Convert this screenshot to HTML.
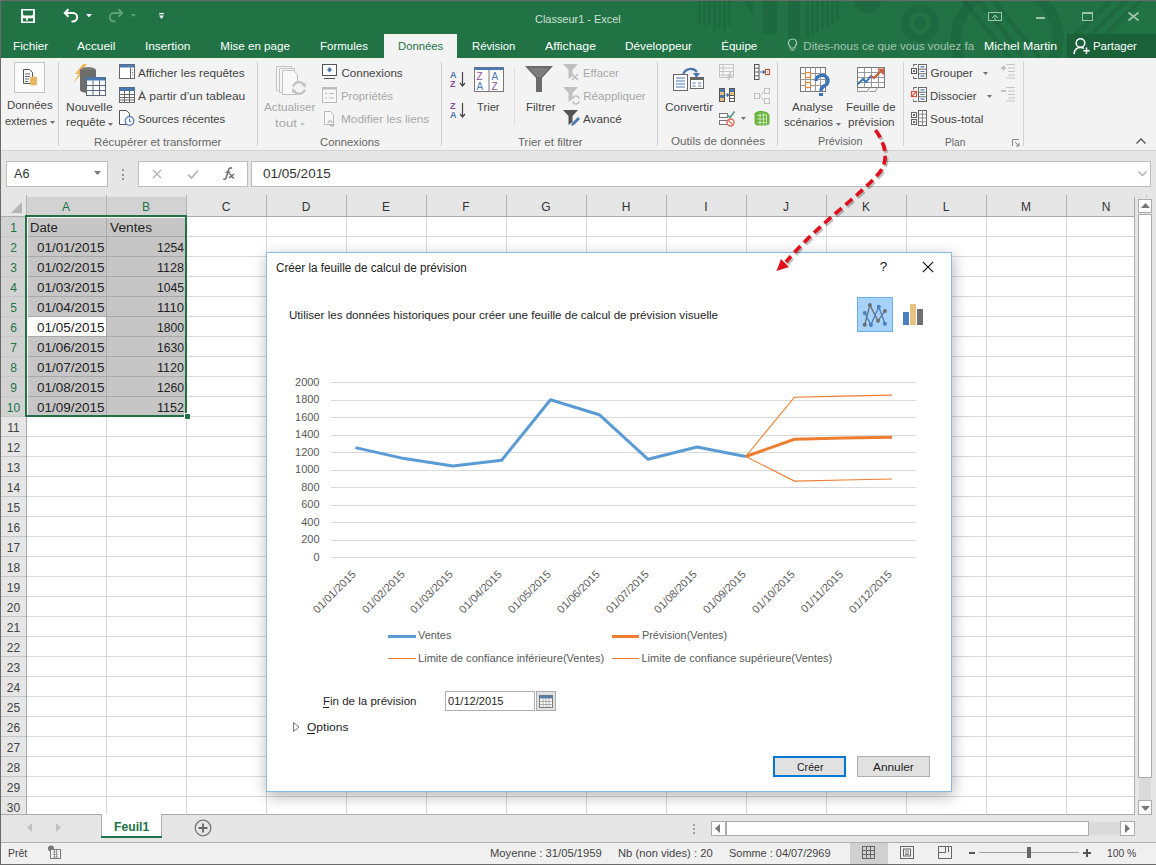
<!DOCTYPE html><html><head><meta charset="utf-8"><style>
html,body{margin:0;padding:0;}
body{width:1156px;height:865px;position:relative;overflow:hidden;background:#fff;font-family:"Liberation Sans",sans-serif;}
.t{position:absolute;white-space:nowrap;}
svg{overflow:visible}
</style></head><body>
<div style="position:absolute;left:0px;top:0px;width:1156px;height:58px;background:#217346"></div>
<svg style="position:absolute;left:0px;top:1px;" width="1156" height="57" viewBox="0 0 1156 57"><defs><clipPath id="tb"><rect x="0" y="0" width="1156" height="57"/></clipPath></defs><g clip-path="url(#tb)"><g fill="rgba(0,0,0,0.075)"><rect x="698" y="0" width="3" height="22"/><rect x="703" y="0" width="3" height="26"/><rect x="708" y="0" width="3" height="24"/><rect x="713" y="0" width="3" height="31"/><rect x="718" y="0" width="3" height="27"/><rect x="723" y="0" width="3" height="30"/><rect x="728" y="0" width="3" height="25"/><path d="M744 0 H753 V15 z"/><rect x="763" y="0" width="14" height="33"/><rect x="788" y="0" width="12" height="38"/><rect x="806" y="0" width="3" height="36"/><rect x="811" y="0" width="3" height="33"/><rect x="816" y="0" width="3" height="31"/><rect x="821" y="0" width="3" height="28"/><rect x="826" y="0" width="3" height="26"/><rect x="831" y="0" width="3" height="23"/><rect x="836" y="0" width="3" height="20"/><path d="M854 0 A13.5 12 0 0 0 881 0z"/><circle cx="920" cy="22" r="6.5"/></g>
<g fill="none" stroke="rgba(0,0,0,0.075)"><circle cx="920" cy="22" r="15" stroke-width="8"/><circle cx="1007" cy="38" r="51" stroke-width="11"/>
<path d="M960 -5 L1010 57 M975 -5 L1025 57 M990 -5 L1040 57" stroke-width="5"/>
<path d="M1075 35 L1115 -5 M1090 35 L1130 -5 M1105 35 L1145 -5" stroke-width="5"/></g></g></svg>
<svg style="position:absolute;left:21px;top:9px;" width="14" height="14" viewBox="0 0 14 14"><path d="M0 0H14V14H0z M2 1.5V5Q2 6.5 3.5 6.5H10.5Q12 6.5 12 5V1.5z M2 9.3H5.2V11.6H7V9.3H12V12.6H2z" fill="#fff" fill-rule="evenodd"/></svg>
<svg style="position:absolute;left:63px;top:8px;" width="17" height="15" viewBox="0 0 17 15"><path d="M5.5 1.2 L1.8 5 L5.5 8.8" stroke="#fff" stroke-width="2" fill="none"/><path d="M2.5 5 H10 A4.2 4.2 0 0 1 10 13.4 H8.5" stroke="#fff" stroke-width="2" fill="none"/></svg>
<svg style="position:absolute;left:86px;top:14px;" width="6" height="3" viewBox="0 0 6 3"><path d="M0 0h6l-3 3.2z" fill="#fff"/></svg>
<svg style="position:absolute;left:107px;top:8px;" width="17" height="15" viewBox="0 0 17 15"><path d="M11.5 1.2 L15.2 5 L11.5 8.8" stroke="#5d9f78" stroke-width="2" fill="none"/><path d="M14.5 5 H7 A4.2 4.2 0 0 0 7 13.4 H8.5" stroke="#5d9f78" stroke-width="2" fill="none"/></svg>
<svg style="position:absolute;left:131px;top:14px;" width="5" height="3" viewBox="0 0 5 3"><path d="M0 0h5l-2.5 3z" fill="#5d9f78"/></svg>
<svg style="position:absolute;left:159px;top:13px;" width="5" height="7" viewBox="0 0 5 7"><rect x="0" y="0" width="5" height="1.2" fill="#fff"/><path d="M0 2.5h5l-2.5 3.5z" fill="#fff"/></svg>
<div class="t" style="left:534.70px;top:12.68px;font-size:11.6px;line-height:11.6px;color:#cfe0d5;transform:scaleX(0.9439);transform-origin:0 0;">Classeur1 - Excel</div>
<svg style="position:absolute;left:988px;top:12px;" width="14" height="9" viewBox="0 0 14 9"><rect x="0.5" y="0.5" width="13" height="8" fill="none" stroke="#9cc4ab"/><path d="M4 6 L7 3 L10 6" stroke="#9cc4ab" fill="none"/><path d="M7 3 V8" stroke="#9cc4ab"/></svg>
<div style="position:absolute;left:1036px;top:17px;width:9px;height:2px;background:#9cc4ab"></div>
<svg style="position:absolute;left:1082px;top:12px;" width="11" height="9" viewBox="0 0 11 9"><rect x="0.5" y="0.5" width="10" height="8" fill="none" stroke="#9cc4ab"/><rect x="0.5" y="0.5" width="10" height="1.5" fill="#9cc4ab"/></svg>
<svg style="position:absolute;left:1128px;top:12px;" width="11" height="9" viewBox="0 0 11 9"><path d="M0.5 0.5 L10.5 8.5 M10.5 0.5 L0.5 8.5" stroke="#9cc4ab" stroke-width="1.7"/></svg>
<div style="position:absolute;left:384px;top:34px;width:73px;height:24px;background:#f3f3f3"></div>
<div style="position:absolute;left:1067px;top:34px;width:89px;height:24px;background:#1a6139"></div>
<div class="t" style="left:13.10px;top:40.48px;font-size:11.6px;line-height:11.6px;color:#ffffff;transform:scaleX(1.0113);transform-origin:0 0;">Fichier</div>
<div class="t" style="left:77.30px;top:40.48px;font-size:11.6px;line-height:11.6px;color:#ffffff;transform:scaleX(1.0269);transform-origin:0 0;">Accueil</div>
<div class="t" style="left:145.30px;top:40.48px;font-size:11.6px;line-height:11.6px;color:#ffffff;transform:scaleX(1.0204);transform-origin:0 0;">Insertion</div>
<div class="t" style="left:220.30px;top:40.48px;font-size:11.6px;line-height:11.6px;color:#ffffff;">Mise en page</div>
<div class="t" style="left:319.50px;top:40.48px;font-size:11.6px;line-height:11.6px;color:#ffffff;transform:scaleX(0.9929);transform-origin:0 0;">Formules</div>
<div class="t" style="left:472.40px;top:40.48px;font-size:11.6px;line-height:11.6px;color:#ffffff;transform:scaleX(0.9733);transform-origin:0 0;">Révision</div>
<div class="t" style="left:545.30px;top:40.48px;font-size:11.6px;line-height:11.6px;color:#ffffff;transform:scaleX(1.0590);transform-origin:0 0;">Affichage</div>
<div class="t" style="left:625.20px;top:40.48px;font-size:11.6px;line-height:11.6px;color:#ffffff;transform:scaleX(1.0201);transform-origin:0 0;">Développeur</div>
<div class="t" style="left:721.20px;top:40.48px;font-size:11.6px;line-height:11.6px;color:#ffffff;">Équipe</div>
<div class="t" style="left:983.80px;top:40.48px;font-size:11.6px;line-height:11.6px;color:#ffffff;transform:scaleX(1.0613);transform-origin:0 0;">Michel Martin</div>
<div class="t" style="left:1093.20px;top:40.48px;font-size:11.6px;line-height:11.6px;color:#ffffff;transform:scaleX(0.9844);transform-origin:0 0;">Partager</div>
<div class="t" style="left:397.50px;top:40.48px;font-size:11.6px;line-height:11.6px;color:#217346;transform:scaleX(0.9734);transform-origin:0 0;">Données</div>
<div class="t" style="left:803.30px;top:40.48px;font-size:11.6px;line-height:11.6px;color:#a3c4af;">Dites-nous ce que vous voulez fa</div>
<svg style="position:absolute;left:787px;top:38px;" width="11" height="14" viewBox="0 0 11 14"><path d="M5.5 1 A4 4 0 0 1 8 8.2 V10 H3 V8.2 A4 4 0 0 1 5.5 1z" fill="none" stroke="#a3c4af" stroke-width="1.2"/><path d="M3.5 12 H7.5" stroke="#a3c4af" stroke-width="1.2"/></svg>
<svg style="position:absolute;left:1073px;top:37px;" width="18" height="18" viewBox="0 0 18 18"><circle cx="7.5" cy="6" r="4.3" fill="none" stroke="#fff" stroke-width="1.5"/><path d="M1 17 C1.5 12 4 10.5 7.5 10.5 C9 10.5 10 10.8 11 11.3" fill="none" stroke="#fff" stroke-width="1.5"/><path d="M13.5 10.5 V17 M10.3 13.8 H16.7" stroke="#fff" stroke-width="1.5"/></svg>
<div style="position:absolute;left:0px;top:58px;width:1156px;height:92px;background:#f3f3f3"></div>
<div style="position:absolute;left:0px;top:150px;width:1156px;height:1px;background:#d4d4d4"></div>
<div style="position:absolute;left:58px;top:62px;width:1px;height:84px;background:#d0d0d0"></div>
<div style="position:absolute;left:257px;top:62px;width:1px;height:84px;background:#d0d0d0"></div>
<div style="position:absolute;left:441px;top:62px;width:1px;height:84px;background:#d0d0d0"></div>
<div style="position:absolute;left:657px;top:62px;width:1px;height:84px;background:#d0d0d0"></div>
<div style="position:absolute;left:777px;top:62px;width:1px;height:84px;background:#d0d0d0"></div>
<div style="position:absolute;left:903px;top:62px;width:1px;height:84px;background:#d0d0d0"></div>
<div style="position:absolute;left:1023px;top:62px;width:1px;height:84px;background:#d0d0d0"></div>
<div style="position:absolute;left:514px;top:68px;width:1px;height:58px;background:#dedede"></div>
<div class="t" style="left:7.30px;top:98.78px;font-size:11.6px;line-height:11.6px;color:#444444;transform:scaleX(0.9820);transform-origin:0 0;">Données</div>
<div class="t" style="left:4.70px;top:114.58px;font-size:11.6px;line-height:11.6px;color:#444444;transform:scaleX(0.9440);transform-origin:0 0;">externes</div>
<div class="t" style="left:66.40px;top:100.78px;font-size:11.6px;line-height:11.6px;color:#444444;transform:scaleX(1.0324);transform-origin:0 0;">Nouvelle</div>
<div class="t" style="left:65.60px;top:116.18px;font-size:11.6px;line-height:11.6px;color:#444444;transform:scaleX(1.0065);transform-origin:0 0;">requête</div>
<div class="t" style="left:138.30px;top:66.98px;font-size:11.6px;line-height:11.6px;color:#444444;transform:scaleX(1.0110);transform-origin:0 0;">Afficher les requêtes</div>
<div class="t" style="left:138.30px;top:90.38px;font-size:11.6px;line-height:11.6px;color:#444444;transform:scaleX(1.0335);transform-origin:0 0;">À partir d’un tableau</div>
<div class="t" style="left:138.30px;top:113.08px;font-size:11.6px;line-height:11.6px;color:#444444;transform:scaleX(0.9660);transform-origin:0 0;">Sources récentes</div>
<div class="t" style="left:94.10px;top:135.88px;font-size:11.6px;line-height:11.6px;color:#666666;transform:scaleX(0.9831);transform-origin:0 0;">Récupérer et transformer</div>
<div class="t" style="left:264.30px;top:100.98px;font-size:11.6px;line-height:11.6px;color:#a8a8a8;transform:scaleX(1.0111);transform-origin:0 0;">Actualiser</div>
<div class="t" style="left:275.00px;top:116.98px;font-size:11.6px;line-height:11.6px;color:#a8a8a8;transform:scaleX(1.1319);transform-origin:0 0;">tout</div>
<div class="t" style="left:341.40px;top:67.08px;font-size:11.6px;line-height:11.6px;color:#444444;">Connexions</div>
<div class="t" style="left:341.40px;top:90.18px;font-size:11.6px;line-height:11.6px;color:#a8a8a8;transform:scaleX(0.9835);transform-origin:0 0;">Propriétés</div>
<div class="t" style="left:341.40px;top:112.98px;font-size:11.6px;line-height:11.6px;color:#a8a8a8;transform:scaleX(1.0221);transform-origin:0 0;">Modifier les liens</div>
<div class="t" style="left:319.80px;top:135.88px;font-size:11.6px;line-height:11.6px;color:#666666;transform:scaleX(0.9745);transform-origin:0 0;">Connexions</div>
<div class="t" style="left:477.40px;top:100.88px;font-size:11.6px;line-height:11.6px;color:#444444;transform:scaleX(0.9654);transform-origin:0 0;">Trier</div>
<div class="t" style="left:525.50px;top:100.88px;font-size:11.6px;line-height:11.6px;color:#444444;transform:scaleX(0.9952);transform-origin:0 0;">Filtrer</div>
<div class="t" style="left:583.20px;top:67.08px;font-size:11.6px;line-height:11.6px;color:#a8a8a8;transform:scaleX(0.9797);transform-origin:0 0;">Effacer</div>
<div class="t" style="left:583.20px;top:89.98px;font-size:11.6px;line-height:11.6px;color:#a8a8a8;">Réappliquer</div>
<div class="t" style="left:583.20px;top:112.88px;font-size:11.6px;line-height:11.6px;color:#444444;transform:scaleX(1.0082);transform-origin:0 0;">Avancé</div>
<div class="t" style="left:517.50px;top:135.88px;font-size:11.6px;line-height:11.6px;color:#666666;transform:scaleX(0.9907);transform-origin:0 0;">Trier et filtrer</div>
<div class="t" style="left:664.80px;top:100.58px;font-size:11.6px;line-height:11.6px;color:#444444;transform:scaleX(1.0242);transform-origin:0 0;">Convertir</div>
<div class="t" style="left:670.70px;top:135.38px;font-size:11.6px;line-height:11.6px;color:#666666;transform:scaleX(1.0063);transform-origin:0 0;">Outils de données</div>
<div class="t" style="left:791.90px;top:100.78px;font-size:11.6px;line-height:11.6px;color:#444444;transform:scaleX(0.9935);transform-origin:0 0;">Analyse</div>
<div class="t" style="left:784.00px;top:116.18px;font-size:11.6px;line-height:11.6px;color:#444444;transform:scaleX(0.9870);transform-origin:0 0;">scénarios</div>
<div class="t" style="left:846.40px;top:100.78px;font-size:11.6px;line-height:11.6px;color:#444444;transform:scaleX(0.9861);transform-origin:0 0;">Feuille de</div>
<div class="t" style="left:847.60px;top:116.18px;font-size:11.6px;line-height:11.6px;color:#444444;transform:scaleX(1.0038);transform-origin:0 0;">prévision</div>
<div class="t" style="left:817.70px;top:135.38px;font-size:11.6px;line-height:11.6px;color:#666666;transform:scaleX(0.9327);transform-origin:0 0;">Prévision</div>
<div class="t" style="left:930.40px;top:66.78px;font-size:11.6px;line-height:11.6px;color:#444444;">Grouper</div>
<div class="t" style="left:930.40px;top:89.78px;font-size:11.6px;line-height:11.6px;color:#444444;transform:scaleX(0.9770);transform-origin:0 0;">Dissocier</div>
<div class="t" style="left:930.40px;top:112.88px;font-size:11.6px;line-height:11.6px;color:#444444;transform:scaleX(1.0224);transform-origin:0 0;">Sous-total</div>
<div class="t" style="left:944.80px;top:135.68px;font-size:11.6px;line-height:11.6px;color:#666666;transform:scaleX(0.8786);transform-origin:0 0;">Plan</div>
<svg style="position:absolute;left:50px;top:121px;" width="5" height="3" viewBox="0 0 5 3"><path d="M0 0h5l-2.5 3z" fill="#707070"/></svg>
<svg style="position:absolute;left:108px;top:122.5px;" width="5" height="3" viewBox="0 0 5 3"><path d="M0 0h5l-2.5 3z" fill="#707070"/></svg>
<svg style="position:absolute;left:299.5px;top:123px;" width="5" height="3" viewBox="0 0 5 3"><path d="M0 0h5l-2.5 3z" fill="#c0c0c0"/></svg>
<svg style="position:absolute;left:836px;top:122.5px;" width="5" height="3" viewBox="0 0 5 3"><path d="M0 0h5l-2.5 3z" fill="#707070"/></svg>
<svg style="position:absolute;left:983px;top:71.5px;" width="5" height="3" viewBox="0 0 5 3"><path d="M0 0h5l-2.5 3z" fill="#707070"/></svg>
<svg style="position:absolute;left:987px;top:94.5px;" width="5" height="3" viewBox="0 0 5 3"><path d="M0 0h5l-2.5 3z" fill="#707070"/></svg>
<svg style="position:absolute;left:741px;top:117px;" width="5" height="3" viewBox="0 0 5 3"><path d="M0 0h5l-2.5 3z" fill="#707070"/></svg>
<div style="position:absolute;left:14px;top:62px;width:29px;height:29px;background:#fbfbfb;border:1px solid #c6c6c6"></div>
<svg style="position:absolute;left:22px;top:68px;" width="16" height="18" viewBox="0 0 16 18"><path d="M1.5 1.5h6l3 3v11h-9z" fill="#fff" stroke="#555" stroke-width="1"/><path d="M3 6h5M3 8.5h5M3 11h4M3 13.5h3" stroke="#666" stroke-width="1"/><ellipse cx="11.5" cy="10" rx="3.5" ry="1.5" fill="#e8b766"/><rect x="8" y="10" width="7" height="6" fill="#e8b766"/><ellipse cx="11.5" cy="16" rx="3.5" ry="1.5" fill="#e8b766"/></svg>
<svg style="position:absolute;left:72px;top:64px;" width="34" height="33" viewBox="0 0 34 33"><path d="M11 0 L3 10 L7 10 L1 19 L13 7 L9 7 L15 0z" fill="#ebb85a"/><ellipse cx="16" cy="6" rx="8" ry="3" fill="#7a7a7a"/><rect x="8" y="6" width="16" height="20" fill="#6d6d6d"/><ellipse cx="16" cy="26" rx="8" ry="3" fill="#6d6d6d"/><rect x="14.5" y="13.5" width="19" height="18" fill="#fff" stroke="#5a6a7a" stroke-width="1"/><rect x="14.5" y="13.5" width="19" height="3" fill="#4a78b0"/><path d="M14.5 21.5h19M14.5 26.5h19M21 16.5v15M27.5 16.5v15" stroke="#5a6a7a" stroke-width="1"/></svg>
<svg style="position:absolute;left:119px;top:64px;" width="16" height="16" viewBox="0 0 16 16"><rect x="0.5" y="0.5" width="15" height="14" fill="#fff" stroke="#666"/><rect x="0.5" y="0.5" width="15" height="3" fill="#4a78b0"/><path d="M11.5 3.5v11" stroke="#666"/><path d="M13 6h1M13 8.5h1M13 11h1M7 2h1M9 2h1" stroke="#888"/></svg>
<svg style="position:absolute;left:119px;top:87px;" width="16" height="16" viewBox="0 0 16 16"><rect x="0.5" y="0.5" width="15" height="15" fill="#fff" stroke="#666"/><rect x="0.5" y="0.5" width="15" height="3.5" fill="#4a78b0"/><path d="M0.5 7.5h15M0.5 10.5h15M0.5 13h15M5.5 4v12M10.5 4v12" stroke="#666"/></svg>
<svg style="position:absolute;left:119px;top:110px;" width="16" height="16" viewBox="0 0 16 16"><path d="M0.5 0.5h7l3 3v11h-10z" fill="#fff" stroke="#555"/><circle cx="10.5" cy="11" r="4.3" fill="#fff" stroke="#4a78b0" stroke-width="1.3"/><path d="M10.5 8.5v2.7h2" stroke="#4a78b0" stroke-width="1.1" fill="none"/></svg>
<svg style="position:absolute;left:276px;top:66px;" width="31" height="30" viewBox="0 0 31 30"><path d="M0.5 0.5h15v24h-15z" fill="#f6f6f6" stroke="#c2c2c2"/><path d="M3.5 2.5h15v24h-15z" fill="#f6f6f6" stroke="#c2c2c2"/><path d="M6.5 4.5h11l4 4v20h-15z" fill="#f8f8f8" stroke="#c2c2c2"/><circle cx="23" cy="22" r="7" fill="#f3f3f3"/><path d="M17.2 20.5 A6 6 0 0 1 28.3 19.5 M28.8 23.5 A6 6 0 0 1 17.7 24.5" stroke="#c2c2c2" stroke-width="2.3" fill="none"/><path d="M25.5 18.5 L30 17 L29.5 22z M20.5 25.5 L16 27 L16.5 22z" fill="#c2c2c2"/></svg>
<svg style="position:absolute;left:322px;top:64px;" width="15" height="16" viewBox="0 0 15 16"><rect x="0.5" y="0.5" width="14" height="11" fill="#fff" stroke="#555"/><path d="M2 14.5h11" stroke="#555"/><path d="M7.5 3 L10 5.8 L7.5 8.6 L5 5.8z" fill="#4a78b0"/></svg>
<svg style="position:absolute;left:322px;top:87px;" width="15" height="16" viewBox="0 0 15 16"><rect x="0.5" y="0.5" width="14" height="15" fill="#f8f8f8" stroke="#bbb"/><rect x="0.5" y="0.5" width="14" height="2" fill="#bbb"/><path d="M3 6.5h2M7 6.5h5M3 11h2M7 11h5" stroke="#bbb" stroke-width="1.2"/></svg>
<svg style="position:absolute;left:324px;top:111px;" width="13" height="15" viewBox="0 0 13 15"><path d="M0.5 0.5h6l3 3v10h-9z" fill="#f8f8f8" stroke="#bbb"/><path d="M4 12a2 2 0 0 1 4 0M6 13a2 2 0 0 0 4 0" stroke="#bbb" stroke-width="1.3" fill="none"/></svg>
<svg style="position:absolute;left:450px;top:70px;" width="16" height="19" viewBox="0 0 16 19"><text x="0" y="8" font-size="9" font-family="Liberation Sans" fill="#4a78b0" font-weight="bold">A</text><text x="0" y="17" font-size="9" font-family="Liberation Sans" fill="#8a4fa0" font-weight="bold">Z</text><path d="M12.5 2v14M10 13l2.5 3l2.5-3" stroke="#444" stroke-width="1.2" fill="none"/></svg>
<svg style="position:absolute;left:450px;top:101px;" width="16" height="19" viewBox="0 0 16 19"><text x="0" y="8" font-size="9" font-family="Liberation Sans" fill="#8a4fa0" font-weight="bold">Z</text><text x="0" y="17" font-size="9" font-family="Liberation Sans" fill="#4a78b0" font-weight="bold">A</text><path d="M12.5 2v14M10 13l2.5 3l2.5-3" stroke="#444" stroke-width="1.2" fill="none"/></svg>
<svg style="position:absolute;left:474px;top:67px;" width="30" height="26" viewBox="0 0 30 26"><rect x="0.5" y="0.5" width="29" height="24" fill="#fff" stroke="#777"/><rect x="0.5" y="0.5" width="29" height="2.5" fill="#4a78b0"/><path d="M15 3v22" stroke="#777"/><text x="2.5" y="13" font-size="10" font-family="Liberation Sans" fill="#8a4fa0">Z</text><text x="2.5" y="23" font-size="10" font-family="Liberation Sans" fill="#4a78b0">A</text><text x="17.5" y="13" font-size="10" font-family="Liberation Sans" fill="#4a78b0">A</text><text x="17.5" y="23" font-size="10" font-family="Liberation Sans" fill="#8a4fa0">Z</text></svg>
<svg style="position:absolute;left:525px;top:66px;" width="29" height="27" viewBox="0 0 29 27"><path d="M0 0h28l-11 12v14h-6v-14z" fill="#6a6a6a"/><path d="M4 2h20l-8 9h-4z" fill="#7d7d7d"/></svg>
<svg style="position:absolute;left:563px;top:64px;" width="17" height="17" viewBox="0 0 17 17"><path d="M0 0h15l-5.5 6v6l-4 3v-9z" fill="#c0c0c0"/><path d="M9 10l6 6M15 10l-6 6" stroke="#c0c0c0" stroke-width="1.5"/></svg>
<svg style="position:absolute;left:563px;top:87px;" width="17" height="17" viewBox="0 0 17 17"><path d="M0 0h15l-5.5 6v6l-4 3v-9z" fill="#c0c0c0"/><path d="M10 12a3 3 0 0 1 6 0M16 14a3 3 0 0 1-6 0" stroke="#c0c0c0" stroke-width="1.3" fill="none"/></svg>
<svg style="position:absolute;left:563px;top:110px;" width="17" height="17" viewBox="0 0 17 17"><path d="M0 0h15l-5.5 6v6l-4 3v-9z" fill="#555"/><path d="M8 16l1-3l6-6l2 2l-6 6z" fill="#4a78b0"/></svg>
<svg style="position:absolute;left:673px;top:65px;" width="32" height="27" viewBox="0 0 32 27"><path d="M10 10 A8 8 0 0 1 24 7" stroke="#4a78b0" stroke-width="2.2" fill="none"/><path d="M20 8h7l-3.5 5z" fill="#4a78b0"/><rect x="0.5" y="9.5" width="14" height="16" fill="#fff" stroke="#666"/><path d="M3 13h9M3 16h9M3 19h9M3 22h9" stroke="#4a78b0" stroke-width="1.2"/><rect x="17.5" y="12.5" width="13" height="11" fill="#fff" stroke="#666"/><rect x="17.5" y="12.5" width="13" height="2.5" fill="#666"/><path d="M19.5 18h3M25 18h3M19.5 21h3M25 21h3" stroke="#4a78b0" stroke-width="1.2"/></svg>
<svg style="position:absolute;left:719px;top:64px;" width="16" height="16" viewBox="0 0 16 16"><rect x="0.5" y="0.5" width="14" height="13" fill="#f6f6f6" stroke="#c4c4c4"/><path d="M0.5 4h14M0.5 7.5h14M0.5 11h14M4 0.5v13" stroke="#c4c4c4"/><path d="M12 8 L9 12 L12 12 L9 16" stroke="#c4c4c4" stroke-width="1.3" fill="none"/></svg>
<svg style="position:absolute;left:719px;top:88px;" width="16" height="14" viewBox="0 0 16 14"><rect x="0.5" y="0.5" width="5" height="13" fill="#fff" stroke="#555"/><rect x="1" y="1" width="4" height="3" fill="#4a78b0"/><rect x="1" y="4" width="4" height="3" fill="#e8c07a"/><rect x="1" y="7" width="4" height="3" fill="#4a78b0"/><rect x="1" y="10" width="4" height="3" fill="#e8c07a"/><rect x="10.5" y="0.5" width="5" height="13" fill="#fff" stroke="#555"/><rect x="11" y="1" width="4" height="3" fill="#4a78b0"/><rect x="11" y="4" width="4" height="3" fill="#e8c07a"/><path d="M11 7.5h4M11 10.5h4" stroke="#555"/><path d="M6.5 7h3M8 5.5l1.5 1.5l-1.5 1.5" stroke="#3b6ea5" stroke-width="1.2" fill="none"/></svg>
<svg style="position:absolute;left:719px;top:109px;" width="16" height="18" viewBox="0 0 16 18"><rect x="0.5" y="4.5" width="8" height="4" fill="#fff" stroke="#777"/><rect x="0.5" y="11.5" width="8" height="4" fill="#fff" stroke="#777"/><path d="M8.5 6l2.5 2.5l4.5-6" stroke="#4a9a8a" stroke-width="1.5" fill="none"/><circle cx="11.5" cy="13.5" r="3.5" fill="#fff" stroke="#e06a5c" stroke-width="1.4"/><path d="M9.3 11.3l4.4 4.4" stroke="#e06a5c" stroke-width="1.3"/></svg>
<svg style="position:absolute;left:754px;top:64px;" width="16" height="16" viewBox="0 0 16 16"><rect x="0.5" y="0.5" width="4.5" height="15" fill="#fff" stroke="#555"/><path d="M0.5 4.2h4.5M0.5 8h4.5M0.5 11.8h4.5" stroke="#555"/><path d="M6 8h4M9 6.5l1.5 1.5l-1.5 1.5" stroke="#3b6ea5" stroke-width="1.2" fill="none"/><rect x="11.5" y="5.5" width="4" height="5" fill="#fff" stroke="#c0503c" stroke-width="1.2"/><rect x="13" y="7.5" width="1" height="1" fill="#c0503c"/></svg>
<svg style="position:absolute;left:754px;top:88px;" width="16" height="16" viewBox="0 0 16 16"><rect x="0.5" y="5.5" width="5" height="5" fill="#f6f6f6" stroke="#c0c0c0"/><rect x="10.5" y="0.5" width="5" height="5" fill="#f6f6f6" stroke="#c0c0c0"/><rect x="10.5" y="10.5" width="5" height="5" fill="#f6f6f6" stroke="#c0c0c0"/><path d="M5.5 8L10.5 3M5.5 8L10.5 13" stroke="#c0c0c0"/></svg>
<svg style="position:absolute;left:754px;top:110px;" width="16" height="16" viewBox="0 0 16 16"><path d="M0.5 3 Q7 -1 13.5 2.5 L15.5 5 V14 L13 15.5 H2 L0.5 13z" fill="#6cb33f"/><path d="M3 5.5 L13 5 M3 9h10M3 12.5h10M6 3v12M9.5 3v12M12.5 4v11" stroke="#d7eec9" stroke-width="0.8"/></svg>
<svg style="position:absolute;left:800px;top:67px;" width="29" height="29" viewBox="0 0 29 29"><rect x="0.5" y="0.5" width="25" height="24" fill="#fff" stroke="#777"/><path d="M0.5 6.5h25M0.5 12.5h25M0.5 18.5h25M5.5 0.5v24M10.5 0.5v24M15.5 0.5v24M20.5 0.5v24" stroke="#999"/><rect x="5.5" y="5.5" width="5" height="5" fill="#fff" stroke="#e0883c" stroke-width="1.2"/><rect x="5.5" y="15.5" width="5" height="5" fill="#fff" stroke="#e0883c" stroke-width="1.2"/><path d="M16 14 A6 5.5 0 1 1 24 19 Q21 21 21 24" stroke="#3b77b8" stroke-width="3.5" fill="none"/><rect x="19" y="26" width="4" height="3" fill="#3b77b8"/></svg>
<svg style="position:absolute;left:857px;top:67px;" width="28" height="25" viewBox="0 0 28 25"><rect x="0.5" y="0.5" width="27" height="20" fill="#fff" stroke="#777"/><path d="M0.5 5.5h27M0.5 10.5h27M0.5 15.5h27M7.5 0.5v20M14.5 0.5v20M21.5 0.5v20" stroke="#999"/><path d="M1 17 L6 12 L9 15 L14 9 L17 11 L25 3" stroke="#3b77b8" stroke-width="2" fill="none"/><path d="M14 9 L17 11 L25 3" stroke="#d2603c" stroke-width="2" fill="none"/><path d="M21 2.5h5v5" stroke="#d2603c" stroke-width="2" fill="none"/><path d="M0.5 20.5v4h10l2-4M12.5 24.5h6l2-4" stroke="#999" fill="none"/></svg>
<svg style="position:absolute;left:911px;top:64px;" width="17" height="16" viewBox="0 0 17 16"><path d="M6 0.5H2.5V2.5M6 14.5H2.5V12.5" stroke="#666" fill="none"/><rect x="0.5" y="4.5" width="5" height="5" fill="#fff" stroke="#555"/><path d="M1.8 7h2.4M3 5.8v2.4" stroke="#444"/><rect x="7.5" y="0.5" width="8" height="14" fill="#fff" stroke="#666"/><path d="M7.5 5.2h8M7.5 9.8h8" stroke="#666"/><path d="M9.5 2.9h4M9.5 7.5h4M9.5 12.1h4" stroke="#4a78b0" stroke-width="1.2"/></svg>
<svg style="position:absolute;left:911px;top:87px;" width="17" height="16" viewBox="0 0 17 16"><path d="M6 0.5H2.5V2.5M6 14.5H2.5V12.5" stroke="#666" fill="none"/><rect x="0.5" y="4.5" width="5" height="5" fill="#fff" stroke="#d2503c" stroke-width="1.2"/><path d="M1 9l4.5-4.5" stroke="#d2503c" stroke-width="1.1"/><rect x="7.5" y="0.5" width="8" height="14" fill="#fff" stroke="#666"/><path d="M7.5 5.2h8M7.5 9.8h8" stroke="#666"/><path d="M9.5 2.9h4M9.5 7.5h4M9.5 12.1h4" stroke="#4a78b0" stroke-width="1.2"/></svg>
<svg style="position:absolute;left:911px;top:110px;" width="17" height="16" viewBox="0 0 17 16"><rect x="0.5" y="2.5" width="5" height="5" fill="#fff" stroke="#666"/><path d="M1.8 5h2.4M3 3.8v2.4" stroke="#444"/><rect x="0.5" y="9.5" width="5" height="5" fill="#fff" stroke="#666"/><path d="M1.8 12h2.4M3 10.8v2.4" stroke="#444"/><rect x="7.5" y="0.5" width="8" height="15" fill="#fff" stroke="#666"/><path d="M7.5 4.2h8M7.5 8h8M7.5 11.8h8M11.5 0.5v15" stroke="#888"/></svg>
<svg style="position:absolute;left:1001px;top:64px;" width="15" height="15" viewBox="0 0 15 15"><path d="M0 4h5M2.5 1.5v5" stroke="#b8b8b8" stroke-width="1.6"/><path d="M5 0.5h9M7 4h7M7 7.5h7M7 11h7M5 14h9" stroke="#c4c4c4"/></svg>
<svg style="position:absolute;left:1001px;top:87px;" width="15" height="15" viewBox="0 0 15 15"><path d="M0 4h5" stroke="#b8b8b8" stroke-width="1.6"/><path d="M5 0.5h9M7 4h7M7 7.5h7M7 11h7M5 14h9" stroke="#c4c4c4"/></svg>
<svg style="position:absolute;left:1012px;top:139px;" width="8" height="8" viewBox="0 0 8 8"><path d="M0.5 7V0.5H7" stroke="#888" fill="none"/><path d="M3 3l4 4M7 4v3h-3" stroke="#888" fill="none"/></svg>
<svg style="position:absolute;left:1136px;top:138px;" width="10" height="6" viewBox="0 0 10 6"><path d="M0.5 5.5 L5 1 L9.5 5.5" stroke="#555" stroke-width="1.4" fill="none"/></svg>
<div style="position:absolute;left:0px;top:151px;width:1156px;height:46px;background:#e6e6e6"></div>
<div style="position:absolute;left:6px;top:161px;width:100px;height:24px;background:#fff;border:1px solid #bdbdbd"></div>
<div class="t" style="left:13.50px;top:168.44px;font-size:12px;line-height:12px;color:#333;transform:scaleX(1.0492);transform-origin:0 0;">A6</div>
<svg style="position:absolute;left:94px;top:171px;" width="7" height="4" viewBox="0 0 7 4"><path d="M0 0h7l-3.5 4z" fill="#777"/></svg>
<div style="position:absolute;left:122px;top:169px;width:2px;height:2px;background:#9a9a9a"></div>
<div style="position:absolute;left:122px;top:173.5px;width:2px;height:2px;background:#9a9a9a"></div>
<div style="position:absolute;left:122px;top:178px;width:2px;height:2px;background:#9a9a9a"></div>
<div style="position:absolute;left:138px;top:161px;width:108px;height:24px;background:#fff;border:1px solid #bdbdbd"></div>
<svg style="position:absolute;left:222px;top:167px;" width="14" height="14" viewBox="0 0 14 14"><path d="M9.8 1.6 C9 0.4 7.2 0.6 6.6 2.6 L4.2 10.6 C3.7 12.4 2.2 12.8 1.3 11.8" stroke="#666" stroke-width="1.5" fill="none"/><path d="M3.6 5.2 H8.4" stroke="#666" stroke-width="1.3"/><path d="M6.6 7.2 C8 6.8 9 7.5 9.5 9 C10 10.5 11 11.2 12.3 10.8 M12.2 7 L6.8 11" stroke="#666" stroke-width="1.3" fill="none"/></svg>
<svg style="position:absolute;left:152px;top:169px;" width="10" height="10" viewBox="0 0 10 10"><path d="M1 1L9 9M9 1L1 9" stroke="#b0b0b0" stroke-width="1.3"/></svg>
<svg style="position:absolute;left:187px;top:169px;" width="12" height="10" viewBox="0 0 12 10"><path d="M1 5.5L4.5 9L11 1.5" stroke="#b0b0b0" stroke-width="1.6" fill="none"/></svg>
<div style="position:absolute;left:251px;top:161px;width:898px;height:24px;background:#fff;border:1px solid #bdbdbd"></div>
<div class="t" style="left:262.80px;top:168.34px;font-size:12px;line-height:12px;color:#333;transform:scaleX(1.1272);transform-origin:0 0;">01/05/2015</div>
<svg style="position:absolute;left:1138px;top:171px;" width="9" height="6" viewBox="0 0 9 6"><path d="M0.5 0.5L4.5 4.5L8.5 0.5" stroke="#b0b0b0" stroke-width="1.4" fill="none"/></svg>
<div style="position:absolute;left:0px;top:195px;width:1134px;height:21px;background:#e6e6e6"></div>
<div style="position:absolute;left:0px;top:216px;width:26px;height:599px;background:#e6e6e6"></div>
<div style="position:absolute;left:27px;top:197px;width:159px;height:19px;background:#d2d2d2"></div>
<div style="position:absolute;left:0px;top:216px;width:26px;height:200px;background:#d2d2d2"></div>
<svg style="position:absolute;left:10px;top:202px;" width="13" height="12" viewBox="0 0 13 12"><path d="M12 0V11H1z" fill="#b5b5b5"/></svg>
<div style="position:absolute;left:106px;top:195px;width:1px;height:21px;background:#b4b4b4"></div>
<div style="position:absolute;left:186px;top:195px;width:1px;height:21px;background:#b4b4b4"></div>
<div style="position:absolute;left:266px;top:195px;width:1px;height:21px;background:#b4b4b4"></div>
<div style="position:absolute;left:346px;top:195px;width:1px;height:21px;background:#b4b4b4"></div>
<div style="position:absolute;left:426px;top:195px;width:1px;height:21px;background:#b4b4b4"></div>
<div style="position:absolute;left:506px;top:195px;width:1px;height:21px;background:#b4b4b4"></div>
<div style="position:absolute;left:586px;top:195px;width:1px;height:21px;background:#b4b4b4"></div>
<div style="position:absolute;left:666px;top:195px;width:1px;height:21px;background:#b4b4b4"></div>
<div style="position:absolute;left:746px;top:195px;width:1px;height:21px;background:#b4b4b4"></div>
<div style="position:absolute;left:826px;top:195px;width:1px;height:21px;background:#b4b4b4"></div>
<div style="position:absolute;left:906px;top:195px;width:1px;height:21px;background:#b4b4b4"></div>
<div style="position:absolute;left:986px;top:195px;width:1px;height:21px;background:#b4b4b4"></div>
<div style="position:absolute;left:1066px;top:195px;width:1px;height:21px;background:#b4b4b4"></div>
<div style="position:absolute;left:1146px;top:195px;width:1px;height:21px;background:#b4b4b4"></div>
<div style="position:absolute;left:26px;top:195px;width:1px;height:21px;background:#b4b4b4"></div>
<div style="position:absolute;left:0px;top:216px;width:1134px;height:1px;background:#ababab"></div>
<div style="position:absolute;left:26px;top:216px;width:1px;height:599px;background:#ababab"></div>
<div style="position:absolute;left:27px;top:217px;width:159px;height:199px;background:#c6c6c6"></div>
<div style="position:absolute;left:27px;top:317px;width:79px;height:19px;background:#fff"></div>
<div style="position:absolute;left:27px;top:236px;width:1107px;height:1px;background:#d9d9d9"></div>
<div style="position:absolute;left:0px;top:236px;width:26px;height:1px;background:#c7c7c7"></div>
<div style="position:absolute;left:27px;top:256px;width:1107px;height:1px;background:#d9d9d9"></div>
<div style="position:absolute;left:0px;top:256px;width:26px;height:1px;background:#c7c7c7"></div>
<div style="position:absolute;left:27px;top:276px;width:1107px;height:1px;background:#d9d9d9"></div>
<div style="position:absolute;left:0px;top:276px;width:26px;height:1px;background:#c7c7c7"></div>
<div style="position:absolute;left:27px;top:296px;width:1107px;height:1px;background:#d9d9d9"></div>
<div style="position:absolute;left:0px;top:296px;width:26px;height:1px;background:#c7c7c7"></div>
<div style="position:absolute;left:27px;top:316px;width:1107px;height:1px;background:#d9d9d9"></div>
<div style="position:absolute;left:0px;top:316px;width:26px;height:1px;background:#c7c7c7"></div>
<div style="position:absolute;left:27px;top:336px;width:1107px;height:1px;background:#d9d9d9"></div>
<div style="position:absolute;left:0px;top:336px;width:26px;height:1px;background:#c7c7c7"></div>
<div style="position:absolute;left:27px;top:356px;width:1107px;height:1px;background:#d9d9d9"></div>
<div style="position:absolute;left:0px;top:356px;width:26px;height:1px;background:#c7c7c7"></div>
<div style="position:absolute;left:27px;top:376px;width:1107px;height:1px;background:#d9d9d9"></div>
<div style="position:absolute;left:0px;top:376px;width:26px;height:1px;background:#c7c7c7"></div>
<div style="position:absolute;left:27px;top:396px;width:1107px;height:1px;background:#d9d9d9"></div>
<div style="position:absolute;left:0px;top:396px;width:26px;height:1px;background:#c7c7c7"></div>
<div style="position:absolute;left:27px;top:416px;width:1107px;height:1px;background:#d9d9d9"></div>
<div style="position:absolute;left:0px;top:416px;width:26px;height:1px;background:#c7c7c7"></div>
<div style="position:absolute;left:27px;top:436px;width:1107px;height:1px;background:#d9d9d9"></div>
<div style="position:absolute;left:0px;top:436px;width:26px;height:1px;background:#c7c7c7"></div>
<div style="position:absolute;left:27px;top:456px;width:1107px;height:1px;background:#d9d9d9"></div>
<div style="position:absolute;left:0px;top:456px;width:26px;height:1px;background:#c7c7c7"></div>
<div style="position:absolute;left:27px;top:476px;width:1107px;height:1px;background:#d9d9d9"></div>
<div style="position:absolute;left:0px;top:476px;width:26px;height:1px;background:#c7c7c7"></div>
<div style="position:absolute;left:27px;top:496px;width:1107px;height:1px;background:#d9d9d9"></div>
<div style="position:absolute;left:0px;top:496px;width:26px;height:1px;background:#c7c7c7"></div>
<div style="position:absolute;left:27px;top:516px;width:1107px;height:1px;background:#d9d9d9"></div>
<div style="position:absolute;left:0px;top:516px;width:26px;height:1px;background:#c7c7c7"></div>
<div style="position:absolute;left:27px;top:536px;width:1107px;height:1px;background:#d9d9d9"></div>
<div style="position:absolute;left:0px;top:536px;width:26px;height:1px;background:#c7c7c7"></div>
<div style="position:absolute;left:27px;top:556px;width:1107px;height:1px;background:#d9d9d9"></div>
<div style="position:absolute;left:0px;top:556px;width:26px;height:1px;background:#c7c7c7"></div>
<div style="position:absolute;left:27px;top:576px;width:1107px;height:1px;background:#d9d9d9"></div>
<div style="position:absolute;left:0px;top:576px;width:26px;height:1px;background:#c7c7c7"></div>
<div style="position:absolute;left:27px;top:596px;width:1107px;height:1px;background:#d9d9d9"></div>
<div style="position:absolute;left:0px;top:596px;width:26px;height:1px;background:#c7c7c7"></div>
<div style="position:absolute;left:27px;top:616px;width:1107px;height:1px;background:#d9d9d9"></div>
<div style="position:absolute;left:0px;top:616px;width:26px;height:1px;background:#c7c7c7"></div>
<div style="position:absolute;left:27px;top:636px;width:1107px;height:1px;background:#d9d9d9"></div>
<div style="position:absolute;left:0px;top:636px;width:26px;height:1px;background:#c7c7c7"></div>
<div style="position:absolute;left:27px;top:656px;width:1107px;height:1px;background:#d9d9d9"></div>
<div style="position:absolute;left:0px;top:656px;width:26px;height:1px;background:#c7c7c7"></div>
<div style="position:absolute;left:27px;top:676px;width:1107px;height:1px;background:#d9d9d9"></div>
<div style="position:absolute;left:0px;top:676px;width:26px;height:1px;background:#c7c7c7"></div>
<div style="position:absolute;left:27px;top:696px;width:1107px;height:1px;background:#d9d9d9"></div>
<div style="position:absolute;left:0px;top:696px;width:26px;height:1px;background:#c7c7c7"></div>
<div style="position:absolute;left:27px;top:716px;width:1107px;height:1px;background:#d9d9d9"></div>
<div style="position:absolute;left:0px;top:716px;width:26px;height:1px;background:#c7c7c7"></div>
<div style="position:absolute;left:27px;top:736px;width:1107px;height:1px;background:#d9d9d9"></div>
<div style="position:absolute;left:0px;top:736px;width:26px;height:1px;background:#c7c7c7"></div>
<div style="position:absolute;left:27px;top:756px;width:1107px;height:1px;background:#d9d9d9"></div>
<div style="position:absolute;left:0px;top:756px;width:26px;height:1px;background:#c7c7c7"></div>
<div style="position:absolute;left:27px;top:776px;width:1107px;height:1px;background:#d9d9d9"></div>
<div style="position:absolute;left:0px;top:776px;width:26px;height:1px;background:#c7c7c7"></div>
<div style="position:absolute;left:27px;top:796px;width:1107px;height:1px;background:#d9d9d9"></div>
<div style="position:absolute;left:0px;top:796px;width:26px;height:1px;background:#c7c7c7"></div>
<div style="position:absolute;left:27px;top:236px;width:159px;height:1px;background:#a9a9a9"></div>
<div style="position:absolute;left:27px;top:256px;width:159px;height:1px;background:#a9a9a9"></div>
<div style="position:absolute;left:27px;top:276px;width:159px;height:1px;background:#a9a9a9"></div>
<div style="position:absolute;left:27px;top:296px;width:159px;height:1px;background:#a9a9a9"></div>
<div style="position:absolute;left:27px;top:316px;width:159px;height:1px;background:#a9a9a9"></div>
<div style="position:absolute;left:27px;top:336px;width:159px;height:1px;background:#a9a9a9"></div>
<div style="position:absolute;left:27px;top:356px;width:159px;height:1px;background:#a9a9a9"></div>
<div style="position:absolute;left:27px;top:376px;width:159px;height:1px;background:#a9a9a9"></div>
<div style="position:absolute;left:27px;top:396px;width:159px;height:1px;background:#a9a9a9"></div>
<div style="position:absolute;left:106px;top:217px;width:1px;height:598px;background:#d9d9d9"></div>
<div style="position:absolute;left:186px;top:217px;width:1px;height:598px;background:#d9d9d9"></div>
<div style="position:absolute;left:266px;top:217px;width:1px;height:598px;background:#d9d9d9"></div>
<div style="position:absolute;left:346px;top:217px;width:1px;height:598px;background:#d9d9d9"></div>
<div style="position:absolute;left:426px;top:217px;width:1px;height:598px;background:#d9d9d9"></div>
<div style="position:absolute;left:506px;top:217px;width:1px;height:598px;background:#d9d9d9"></div>
<div style="position:absolute;left:586px;top:217px;width:1px;height:598px;background:#d9d9d9"></div>
<div style="position:absolute;left:666px;top:217px;width:1px;height:598px;background:#d9d9d9"></div>
<div style="position:absolute;left:746px;top:217px;width:1px;height:598px;background:#d9d9d9"></div>
<div style="position:absolute;left:826px;top:217px;width:1px;height:598px;background:#d9d9d9"></div>
<div style="position:absolute;left:906px;top:217px;width:1px;height:598px;background:#d9d9d9"></div>
<div style="position:absolute;left:986px;top:217px;width:1px;height:598px;background:#d9d9d9"></div>
<div style="position:absolute;left:1066px;top:217px;width:1px;height:598px;background:#d9d9d9"></div>
<div style="position:absolute;left:106px;top:217px;width:1px;height:199px;background:#a9a9a9"></div>
<div style="position:absolute;left:1134px;top:197px;width:1px;height:618px;background:#ababab"></div>
<div style="position:absolute;left:0px;top:814px;width:1135px;height:1px;background:#ababab"></div>
<div class="t" style="left:62.00px;top:200.84px;font-size:12px;line-height:12px;color:#217346;">A</div>
<div class="t" style="left:142.00px;top:200.84px;font-size:12px;line-height:12px;color:#217346;">B</div>
<div class="t" style="left:221.67px;top:200.84px;font-size:12px;line-height:12px;color:#333;">C</div>
<div class="t" style="left:301.67px;top:200.84px;font-size:12px;line-height:12px;color:#333;">D</div>
<div class="t" style="left:382.00px;top:200.84px;font-size:12px;line-height:12px;color:#333;">E</div>
<div class="t" style="left:462.33px;top:200.84px;font-size:12px;line-height:12px;color:#333;">F</div>
<div class="t" style="left:541.33px;top:200.84px;font-size:12px;line-height:12px;color:#333;">G</div>
<div class="t" style="left:621.67px;top:200.84px;font-size:12px;line-height:12px;color:#333;">H</div>
<div class="t" style="left:704.33px;top:200.84px;font-size:12px;line-height:12px;color:#333;">I</div>
<div class="t" style="left:783.00px;top:200.84px;font-size:12px;line-height:12px;color:#333;">J</div>
<div class="t" style="left:862.00px;top:200.84px;font-size:12px;line-height:12px;color:#333;">K</div>
<div class="t" style="left:942.66px;top:200.84px;font-size:12px;line-height:12px;color:#333;">L</div>
<div class="t" style="left:1021.00px;top:200.84px;font-size:12px;line-height:12px;color:#333;">M</div>
<div class="t" style="left:1101.67px;top:200.84px;font-size:12px;line-height:12px;color:#333;">N</div>
<div class="t" style="left:10.16px;top:221.64px;font-size:12px;line-height:12px;color:#217346;">1</div>
<div class="t" style="left:10.16px;top:241.64px;font-size:12px;line-height:12px;color:#217346;">2</div>
<div class="t" style="left:10.16px;top:261.64px;font-size:12px;line-height:12px;color:#217346;">3</div>
<div class="t" style="left:10.16px;top:281.64px;font-size:12px;line-height:12px;color:#217346;">4</div>
<div class="t" style="left:10.16px;top:301.64px;font-size:12px;line-height:12px;color:#217346;">5</div>
<div class="t" style="left:10.16px;top:321.64px;font-size:12px;line-height:12px;color:#217346;">6</div>
<div class="t" style="left:10.16px;top:341.64px;font-size:12px;line-height:12px;color:#217346;">7</div>
<div class="t" style="left:10.16px;top:361.64px;font-size:12px;line-height:12px;color:#217346;">8</div>
<div class="t" style="left:10.16px;top:381.64px;font-size:12px;line-height:12px;color:#217346;">9</div>
<div class="t" style="left:6.83px;top:401.64px;font-size:12px;line-height:12px;color:#217346;">10</div>
<div class="t" style="left:7.27px;top:421.64px;font-size:12px;line-height:12px;color:#444;">11</div>
<div class="t" style="left:6.83px;top:441.64px;font-size:12px;line-height:12px;color:#444;">12</div>
<div class="t" style="left:6.83px;top:461.64px;font-size:12px;line-height:12px;color:#444;">13</div>
<div class="t" style="left:6.83px;top:481.64px;font-size:12px;line-height:12px;color:#444;">14</div>
<div class="t" style="left:6.83px;top:501.64px;font-size:12px;line-height:12px;color:#444;">15</div>
<div class="t" style="left:6.83px;top:521.64px;font-size:12px;line-height:12px;color:#444;">16</div>
<div class="t" style="left:6.83px;top:541.64px;font-size:12px;line-height:12px;color:#444;">17</div>
<div class="t" style="left:6.83px;top:561.64px;font-size:12px;line-height:12px;color:#444;">18</div>
<div class="t" style="left:6.83px;top:581.64px;font-size:12px;line-height:12px;color:#444;">19</div>
<div class="t" style="left:6.83px;top:601.64px;font-size:12px;line-height:12px;color:#444;">20</div>
<div class="t" style="left:6.83px;top:621.64px;font-size:12px;line-height:12px;color:#444;">21</div>
<div class="t" style="left:6.83px;top:641.64px;font-size:12px;line-height:12px;color:#444;">22</div>
<div class="t" style="left:6.83px;top:661.64px;font-size:12px;line-height:12px;color:#444;">23</div>
<div class="t" style="left:6.83px;top:681.64px;font-size:12px;line-height:12px;color:#444;">24</div>
<div class="t" style="left:6.83px;top:701.64px;font-size:12px;line-height:12px;color:#444;">25</div>
<div class="t" style="left:6.83px;top:721.64px;font-size:12px;line-height:12px;color:#444;">26</div>
<div class="t" style="left:6.83px;top:741.64px;font-size:12px;line-height:12px;color:#444;">27</div>
<div class="t" style="left:6.83px;top:761.64px;font-size:12px;line-height:12px;color:#444;">28</div>
<div class="t" style="left:6.83px;top:781.64px;font-size:12px;line-height:12px;color:#444;">29</div>
<div class="t" style="left:6.83px;top:801.64px;font-size:12px;line-height:12px;color:#444;">30</div>
<div class="t" style="left:29.50px;top:221.84px;font-size:12px;line-height:12px;color:#222;transform:scaleX(1.0928);transform-origin:0 0;">Date</div>
<div class="t" style="left:110.00px;top:221.84px;font-size:12px;line-height:12px;color:#222;transform:scaleX(1.1445);transform-origin:0 0;">Ventes</div>
<div class="t" style="left:36.50px;top:242.04px;font-size:12px;line-height:12px;color:#222;transform:scaleX(1.1239);transform-origin:0 0;">01/01/2015</div>
<div class="t" style="left:157.00px;top:242.04px;font-size:12px;line-height:12px;color:#222;transform:scaleX(1.0114);transform-origin:0 0;">1254</div>
<div class="t" style="left:36.50px;top:262.04px;font-size:12px;line-height:12px;color:#222;transform:scaleX(1.1239);transform-origin:0 0;">01/02/2015</div>
<div class="t" style="left:157.00px;top:262.04px;font-size:12px;line-height:12px;color:#222;transform:scaleX(1.0463);transform-origin:0 0;">1128</div>
<div class="t" style="left:36.50px;top:282.04px;font-size:12px;line-height:12px;color:#222;transform:scaleX(1.1239);transform-origin:0 0;">01/03/2015</div>
<div class="t" style="left:157.00px;top:282.04px;font-size:12px;line-height:12px;color:#222;transform:scaleX(1.0114);transform-origin:0 0;">1045</div>
<div class="t" style="left:36.50px;top:302.04px;font-size:12px;line-height:12px;color:#222;transform:scaleX(1.1239);transform-origin:0 0;">01/04/2015</div>
<div class="t" style="left:157.00px;top:302.04px;font-size:12px;line-height:12px;color:#222;transform:scaleX(1.0837);transform-origin:0 0;">1110</div>
<div class="t" style="left:36.50px;top:322.04px;font-size:12px;line-height:12px;color:#222;transform:scaleX(1.1239);transform-origin:0 0;">01/05/2015</div>
<div class="t" style="left:157.00px;top:322.04px;font-size:12px;line-height:12px;color:#222;transform:scaleX(1.0114);transform-origin:0 0;">1800</div>
<div class="t" style="left:36.50px;top:342.04px;font-size:12px;line-height:12px;color:#222;transform:scaleX(1.1239);transform-origin:0 0;">01/06/2015</div>
<div class="t" style="left:157.00px;top:342.04px;font-size:12px;line-height:12px;color:#222;transform:scaleX(1.0114);transform-origin:0 0;">1630</div>
<div class="t" style="left:36.50px;top:362.04px;font-size:12px;line-height:12px;color:#222;transform:scaleX(1.1239);transform-origin:0 0;">01/07/2015</div>
<div class="t" style="left:157.00px;top:362.04px;font-size:12px;line-height:12px;color:#222;transform:scaleX(1.0463);transform-origin:0 0;">1120</div>
<div class="t" style="left:36.50px;top:382.04px;font-size:12px;line-height:12px;color:#222;transform:scaleX(1.1239);transform-origin:0 0;">01/08/2015</div>
<div class="t" style="left:157.00px;top:382.04px;font-size:12px;line-height:12px;color:#222;transform:scaleX(1.0114);transform-origin:0 0;">1260</div>
<div class="t" style="left:36.50px;top:402.04px;font-size:12px;line-height:12px;color:#222;transform:scaleX(1.1239);transform-origin:0 0;">01/09/2015</div>
<div class="t" style="left:157.00px;top:402.04px;font-size:12px;line-height:12px;color:#222;transform:scaleX(1.0463);transform-origin:0 0;">1152</div>
<div style="position:absolute;left:27px;top:217px;width:158px;height:1px;background:#fff"></div>
<div style="position:absolute;left:27px;top:217px;width:1px;height:198px;background:#fff"></div>
<div style="position:absolute;left:25px;top:215px;width:162px;height:2px;background:#217346"></div>
<div style="position:absolute;left:25px;top:415px;width:162px;height:2px;background:#217346"></div>
<div style="position:absolute;left:25px;top:215px;width:2px;height:202px;background:#217346"></div>
<div style="position:absolute;left:185px;top:215px;width:2px;height:202px;background:#217346"></div>
<div style="position:absolute;left:184px;top:413px;width:5px;height:5px;background:#217346;border:1px solid #fff"></div>
<div style="position:absolute;left:1135px;top:197px;width:21px;height:618px;background:#e6e6e6"></div>
<div style="position:absolute;left:1138px;top:199px;width:14px;height:14px;background:#fff;border:1px solid #ababab;box-sizing:border-box"></div>
<svg style="position:absolute;left:1141px;top:203px;" width="9" height="5" viewBox="0 0 9 5"><path d="M0 5h9L4.5 0z" fill="#777"/></svg>
<div style="position:absolute;left:1138px;top:214px;width:14px;height:564px;background:#fff;border:1px solid #ababab;box-sizing:border-box"></div>
<div style="position:absolute;left:1139px;top:778px;width:12px;height:22px;background:#dadada"></div>
<div style="position:absolute;left:1138px;top:800px;width:14px;height:15px;background:#fff;border:1px solid #ababab;box-sizing:border-box"></div>
<svg style="position:absolute;left:1141px;top:806px;" width="9" height="5" viewBox="0 0 9 5"><path d="M0 0h9L4.5 5z" fill="#777"/></svg>
<div style="position:absolute;left:0px;top:815px;width:1156px;height:27px;background:#e6e6e6"></div>
<div style="position:absolute;left:101px;top:814px;width:61px;height:24px;background:#fff;border-left:1px solid #ababab;border-right:1px solid #ababab;box-sizing:border-box"></div>
<div style="position:absolute;left:101px;top:836px;width:61px;height:2px;background:#217346"></div>
<div class="t" style="left:113.80px;top:821.44px;font-size:12px;line-height:12px;color:#217346;font-weight:bold;transform:scaleX(1.0151);transform-origin:0 0;">Feuil1</div>
<svg style="position:absolute;left:27px;top:823px;" width="5" height="9" viewBox="0 0 5 9"><path d="M5 0V9L0 4.5z" fill="#c0c0c0"/></svg>
<svg style="position:absolute;left:56px;top:823px;" width="5" height="9" viewBox="0 0 5 9"><path d="M0 0V9L5 4.5z" fill="#c0c0c0"/></svg>
<svg style="position:absolute;left:194px;top:819px;" width="18" height="18" viewBox="0 0 18 18"><circle cx="9" cy="9" r="7.8" fill="none" stroke="#777" stroke-width="1.3"/><path d="M9 4.5V13.5M4.5 9H13.5" stroke="#666" stroke-width="1.8"/></svg>
<div style="position:absolute;left:693px;top:824px;width:2px;height:2px;background:#a0a0a0"></div>
<div style="position:absolute;left:693px;top:828px;width:2px;height:2px;background:#a0a0a0"></div>
<div style="position:absolute;left:693px;top:832px;width:2px;height:2px;background:#a0a0a0"></div>
<div style="position:absolute;left:711px;top:821px;width:15px;height:15px;background:#fff;border:1px solid #ababab;box-sizing:border-box"></div>
<svg style="position:absolute;left:715px;top:824px;" width="5" height="9" viewBox="0 0 5 9"><path d="M5 0V9L0 4.5z" fill="#777"/></svg>
<div style="position:absolute;left:726px;top:821px;width:363px;height:15px;background:#fff;border:1px solid #ababab;box-sizing:border-box"></div>
<div style="position:absolute;left:1089px;top:822px;width:31px;height:13px;background:#dadada"></div>
<div style="position:absolute;left:1120px;top:821px;width:15px;height:15px;background:#fff;border:1px solid #ababab;box-sizing:border-box"></div>
<svg style="position:absolute;left:1125px;top:824px;" width="5" height="9" viewBox="0 0 5 9"><path d="M0 0V9L5 4.5z" fill="#777"/></svg>
<div style="position:absolute;left:0px;top:842px;width:1156px;height:22px;background:#f0f0f0"></div>
<div style="position:absolute;left:0px;top:842px;width:1156px;height:1px;background:#aeaeae"></div>
<div class="t" style="left:8.30px;top:846.78px;font-size:11.6px;line-height:11.6px;color:#444;transform:scaleX(0.9072);transform-origin:0 0;">Prêt</div>
<svg style="position:absolute;left:47px;top:845px;" width="14" height="14" viewBox="0 0 14 14"><circle cx="4" cy="3.5" r="3" fill="#777"/><rect x="3.5" y="4.5" width="10" height="9" fill="#fff" stroke="#777"/><path d="M5.5 7h6M5.5 9.5h6M5.5 12h6M7.5 5v8M9.5 5v8" stroke="#888" stroke-width="0.8"/></svg>
<div class="t" style="left:489.70px;top:846.78px;font-size:11.6px;line-height:11.6px;color:#444;transform:scaleX(0.9684);transform-origin:0 0;">Moyenne : 31/05/1959</div>
<div class="t" style="left:618.00px;top:846.78px;font-size:11.6px;line-height:11.6px;color:#444;transform:scaleX(0.9663);transform-origin:0 0;">Nb (non vides) : 20</div>
<div class="t" style="left:729.00px;top:846.78px;font-size:11.6px;line-height:11.6px;color:#444;transform:scaleX(0.9434);transform-origin:0 0;">Somme : 04/07/2969</div>
<div style="position:absolute;left:850px;top:843px;width:38px;height:21px;background:#d0d0d0"></div>
<svg style="position:absolute;left:862px;top:846px;" width="13" height="13" viewBox="0 0 13 13"><rect x="0.5" y="0.5" width="12" height="12" fill="none" stroke="#666"/><path d="M0.5 4.5h12M0.5 8.5h12M4.5 0.5v12M8.5 0.5v12" stroke="#666"/></svg>
<svg style="position:absolute;left:900px;top:846px;" width="14" height="13" viewBox="0 0 14 13"><rect x="0.5" y="0.5" width="13" height="12" fill="none" stroke="#666"/><rect x="3.5" y="3" width="7" height="7" fill="none" stroke="#666"/><path d="M5 5h4M5 7h4M5 8.5h4" stroke="#666" stroke-width="0.8"/></svg>
<svg style="position:absolute;left:938px;top:846px;" width="14" height="13" viewBox="0 0 14 13"><path d="M0.5 12.5V0.5H13.5V12.5z" fill="none" stroke="#666"/><path d="M0.5 6.5H7.5V0.5M10.5 0.5V6.5" stroke="#666" fill="none"/></svg>
<div style="position:absolute;left:969px;top:852px;width:6px;height:2px;background:#555"></div>
<div style="position:absolute;left:979px;top:852px;width:100px;height:1px;background:#a0a0a0"></div>
<div style="position:absolute;left:1027px;top:847px;width:4px;height:11px;background:#666"></div>
<div style="position:absolute;left:1083px;top:852px;width:8px;height:2px;background:#555"></div>
<div style="position:absolute;left:1086px;top:849px;width:2px;height:8px;background:#555"></div>
<div class="t" style="left:1106.50px;top:846.98px;font-size:11.6px;line-height:11.6px;color:#444;transform:scaleX(0.8908);transform-origin:0 0;">100 %</div>
<div style="position:absolute;left:266px;top:252px;width:686px;height:540px;background:#fff;border:1px solid #86b9e6;box-sizing:border-box;box-shadow:1px 4px 14px rgba(0,0,0,0.3)"></div>
<div class="t" style="left:275.80px;top:261.54px;font-size:12px;line-height:12px;color:#1e1e1e;transform:scaleX(0.9724);transform-origin:0 0;">Créer la feuille de calcul de prévision</div>
<div class="t" style="left:879.80px;top:260.47px;font-size:13.5px;line-height:13.5px;color:#111;">?</div>
<svg style="position:absolute;left:922px;top:261px;" width="12" height="12" viewBox="0 0 12 12"><path d="M0.8 0.8L11.2 11.2M11.2 0.8L0.8 11.2" stroke="#111" stroke-width="1.2"/></svg>
<div class="t" style="left:288.70px;top:309.89px;font-size:11px;line-height:11px;color:#1e1e1e;transform:scaleX(1.0535);transform-origin:0 0;">Utiliser les données historiques pour créer une feuille de calcul de prévision visuelle</div>
<div style="position:absolute;left:857px;top:297px;width:36px;height:35px;background:#a6d2fb;border:1px solid #68aee8;box-sizing:border-box"></div>
<svg style="position:absolute;left:857px;top:297px;" width="36" height="35" viewBox="0 0 36 35"><path d="M7.7 27.7 L12.9 8.1 L21 23.8 L27.9 14" stroke="#6d6d6d" stroke-width="1.3" fill="none"/><path d="M7.7 16 L13.9 27.9 L21.8 9.8 L27.9 26.8" stroke="#4d7fb8" stroke-width="1.3" fill="none"/>
<g fill="#6d6d6d"><circle cx="7.7" cy="27.7" r="2"/><circle cx="12.9" cy="8.1" r="2"/><circle cx="21" cy="23.8" r="2"/><circle cx="27.9" cy="14" r="2"/></g>
<g fill="#4d7fb8"><circle cx="7.7" cy="16" r="2"/><circle cx="13.9" cy="27.9" r="2"/><circle cx="21.8" cy="9.8" r="2"/><circle cx="27.9" cy="26.8" r="2"/></g></svg>
<div style="position:absolute;left:903px;top:312px;width:6px;height:13px;background:#4b7fbd"></div>
<div style="position:absolute;left:910px;top:304px;width:6px;height:21px;background:#e6c283"></div>
<div style="position:absolute;left:917px;top:309px;width:6px;height:16px;background:#707070"></div>
<svg style="position:absolute;left:0;top:0" width="1156" height="865" viewBox="0 0 1156 865"><path d="M331 557.5H916.4" stroke="#d9d9d9" stroke-width="1"/><path d="M331 540.5H916.4" stroke="#d9d9d9" stroke-width="1"/><path d="M331 522.5H916.4" stroke="#d9d9d9" stroke-width="1"/><path d="M331 505.5H916.4" stroke="#d9d9d9" stroke-width="1"/><path d="M331 487.5H916.4" stroke="#d9d9d9" stroke-width="1"/><path d="M331 470.5H916.4" stroke="#d9d9d9" stroke-width="1"/><path d="M331 452.5H916.4" stroke="#d9d9d9" stroke-width="1"/><path d="M331 435.5H916.4" stroke="#d9d9d9" stroke-width="1"/><path d="M331 417.5H916.4" stroke="#d9d9d9" stroke-width="1"/><path d="M331 400.5H916.4" stroke="#d9d9d9" stroke-width="1"/><path d="M331 382.5H916.4" stroke="#d9d9d9" stroke-width="1"/><polyline points="745.7,456.5 794.4,397.2 843.2,396.1 892.0,395.1" fill="none" stroke="#ed7d31" stroke-width="1.1"/><polyline points="745.7,456.5 794.4,481.1 843.2,480.0 892.0,479.0" fill="none" stroke="#ed7d31" stroke-width="1.1"/><polyline points="745.7,456.5 794.4,439.3 843.2,438.1 892.0,437.2" fill="none" stroke="#ed7d31" stroke-width="3"/><polyline points="355.4,447.6 404.2,458.6 453.0,465.9 501.7,460.2 550.5,399.8 599.3,414.7 648.1,459.3 696.9,447.0 745.7,456.5" fill="none" stroke="#5b9bd5" stroke-width="3" stroke-linejoin="round"/></svg>
<div class="t" style="left:313.38px;top:551.79px;font-size:11px;line-height:11px;color:#595959;">0</div>
<div class="t" style="left:301.15px;top:534.29px;font-size:11px;line-height:11px;color:#595959;">200</div>
<div class="t" style="left:301.15px;top:516.79px;font-size:11px;line-height:11px;color:#595959;">400</div>
<div class="t" style="left:301.15px;top:499.29px;font-size:11px;line-height:11px;color:#595959;">600</div>
<div class="t" style="left:301.15px;top:481.79px;font-size:11px;line-height:11px;color:#595959;">800</div>
<div class="t" style="left:295.03px;top:464.29px;font-size:11px;line-height:11px;color:#595959;">1000</div>
<div class="t" style="left:295.03px;top:446.79px;font-size:11px;line-height:11px;color:#595959;">1200</div>
<div class="t" style="left:295.03px;top:429.29px;font-size:11px;line-height:11px;color:#595959;">1400</div>
<div class="t" style="left:295.03px;top:411.79px;font-size:11px;line-height:11px;color:#595959;">1600</div>
<div class="t" style="left:295.03px;top:394.29px;font-size:11px;line-height:11px;color:#595959;">1800</div>
<div class="t" style="left:295.03px;top:376.79px;font-size:11px;line-height:11px;color:#595959;">2000</div>
<div class="t" style="left:298.84px;top:567.00px;font-size:11px;line-height:11px;color:#595959;transform-origin:100% 50%;transform:rotate(-45deg)">01/01/2015</div>
<div class="t" style="left:347.62px;top:567.00px;font-size:11px;line-height:11px;color:#595959;transform-origin:100% 50%;transform:rotate(-45deg)">01/02/2015</div>
<div class="t" style="left:396.40px;top:567.00px;font-size:11px;line-height:11px;color:#595959;transform-origin:100% 50%;transform:rotate(-45deg)">01/03/2015</div>
<div class="t" style="left:445.19px;top:567.00px;font-size:11px;line-height:11px;color:#595959;transform-origin:100% 50%;transform:rotate(-45deg)">01/04/2015</div>
<div class="t" style="left:493.97px;top:567.00px;font-size:11px;line-height:11px;color:#595959;transform-origin:100% 50%;transform:rotate(-45deg)">01/05/2015</div>
<div class="t" style="left:542.75px;top:567.00px;font-size:11px;line-height:11px;color:#595959;transform-origin:100% 50%;transform:rotate(-45deg)">01/06/2015</div>
<div class="t" style="left:591.54px;top:567.00px;font-size:11px;line-height:11px;color:#595959;transform-origin:100% 50%;transform:rotate(-45deg)">01/07/2015</div>
<div class="t" style="left:640.32px;top:567.00px;font-size:11px;line-height:11px;color:#595959;transform-origin:100% 50%;transform:rotate(-45deg)">01/08/2015</div>
<div class="t" style="left:689.10px;top:567.00px;font-size:11px;line-height:11px;color:#595959;transform-origin:100% 50%;transform:rotate(-45deg)">01/09/2015</div>
<div class="t" style="left:737.89px;top:567.00px;font-size:11px;line-height:11px;color:#595959;transform-origin:100% 50%;transform:rotate(-45deg)">01/10/2015</div>
<div class="t" style="left:787.49px;top:567.00px;font-size:11px;line-height:11px;color:#595959;transform-origin:100% 50%;transform:rotate(-45deg)">01/11/2015</div>
<div class="t" style="left:835.45px;top:567.00px;font-size:11px;line-height:11px;color:#595959;transform-origin:100% 50%;transform:rotate(-45deg)">01/12/2015</div>
<div style="position:absolute;left:388px;top:635px;width:28px;height:3px;background:#5b9bd5"></div>
<div class="t" style="left:417.80px;top:629.79px;font-size:11px;line-height:11px;color:#595959;transform:scaleX(0.9929);transform-origin:0 0;">Ventes</div>
<div style="position:absolute;left:612px;top:635px;width:27px;height:3px;background:#ed7d31"></div>
<div class="t" style="left:641.50px;top:629.79px;font-size:11px;line-height:11px;color:#595959;transform:scaleX(0.9871);transform-origin:0 0;">Prévision(Ventes)</div>
<div style="position:absolute;left:388px;top:658px;width:28px;height:1px;background:#ed7d31"></div>
<div class="t" style="left:418.00px;top:652.79px;font-size:11px;line-height:11px;color:#595959;transform:scaleX(1.0083);transform-origin:0 0;">Limite de confiance inférieure(Ventes)</div>
<div style="position:absolute;left:612px;top:658px;width:27px;height:1px;background:#ed7d31"></div>
<div class="t" style="left:641.50px;top:652.79px;font-size:11px;line-height:11px;color:#595959;">Limite de confiance supérieure(Ventes)</div>
<div class="t" style="left:322.80px;top:696.29px;font-size:11px;line-height:11px;color:#1e1e1e;transform:scaleX(1.0474);transform-origin:0 0;">Fin de la prévision</div>
<div style="position:absolute;left:323px;top:707px;width:6px;height:1px;background:#1e1e1e"></div>
<div style="position:absolute;left:445px;top:691px;width:90px;height:20px;background:#fff;border:1px solid #abadb3;box-sizing:border-box"></div>
<div class="t" style="left:448.20px;top:695.99px;font-size:11px;line-height:11px;color:#1e1e1e;transform:scaleX(1.0081);transform-origin:0 0;">01/12/2015</div>
<div style="position:absolute;left:536px;top:691px;width:20px;height:20px;background:#e1e1e1;border:1px solid #adadad;box-sizing:border-box"></div>
<svg style="position:absolute;left:539px;top:694px;" width="14" height="14" viewBox="0 0 14 14"><rect x="0.5" y="1.5" width="13" height="12" fill="#fff" stroke="#777"/><rect x="0.5" y="1.5" width="13" height="3" fill="#5a7da8"/><path d="M0.5 7.5h13M0.5 10.5h13M4 4.5v9M7 4.5v9M10 4.5v9" stroke="#999" stroke-width="0.8"/></svg>
<svg style="position:absolute;left:293px;top:722px;" width="7" height="10" viewBox="0 0 7 10"><path d="M0.5 0.5L6 5L0.5 9.5z" fill="#fff" stroke="#777" stroke-width="1"/></svg>
<div class="t" style="left:307.30px;top:722.19px;font-size:11px;line-height:11px;color:#1e1e1e;transform:scaleX(1.0947);transform-origin:0 0;">Options</div>
<div style="position:absolute;left:307px;top:733px;width:8px;height:1px;background:#1e1e1e"></div>
<div style="position:absolute;left:773px;top:756px;width:73px;height:21px;background:#e1e1e1;border:2px solid #0078d7;box-sizing:border-box"></div>
<div class="t" style="left:796.60px;top:761.67px;font-size:11.5px;line-height:11.5px;color:#1e1e1e;transform:scaleX(0.9180);transform-origin:0 0;">Créer</div>
<div style="position:absolute;left:857px;top:756px;width:73px;height:21px;background:#e1e1e1;border:1px solid #adadad;box-sizing:border-box"></div>
<div class="t" style="left:873.40px;top:761.67px;font-size:11.5px;line-height:11.5px;color:#1e1e1e;transform:scaleX(1.0293);transform-origin:0 0;">Annuler</div>
<svg style="position:absolute;left:0;top:0" width="1156" height="865" viewBox="0 0 1156 865"><g transform="translate(1.5,2)" opacity="0.25"><path d="M875.5 130 C884 142 890 158 880 172 C860 196 820 222 786 262" fill="none" stroke="#000" stroke-width="3.6" stroke-dasharray="9 5"/></g><path d="M875.5 130 C884 142 890 158 880 172 C860 196 820 222 786 262" fill="none" stroke="#e0101c" stroke-width="3.6" stroke-dasharray="9 5"/><path d="M776.5 271 L781 259 L789 267z" fill="#e0101c"/></svg>
<div style="position:absolute;left:0px;top:0px;width:1156px;height:1px;background:#6a6a6a"></div>
<div style="position:absolute;left:0px;top:0px;width:1px;height:865px;background:#6a6a6a"></div>
<div style="position:absolute;left:0px;top:864px;width:1156px;height:1px;background:#6a6a6a"></div>
</body></html>
